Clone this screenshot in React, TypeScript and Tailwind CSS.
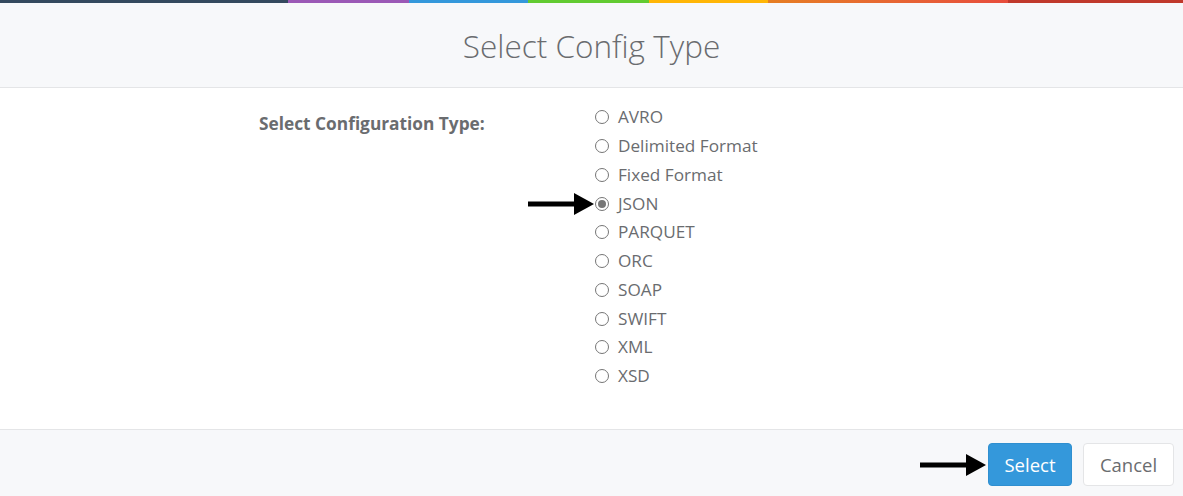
import React from "react";

const options = [
  "AVRO",
  "Delimited Format",
  "Fixed Format",
  "JSON",
  "PARQUET",
  "ORC",
  "SOAP",
  "SWIFT",
  "XML",
  "XSD",
];

function Arrow() {
  return (
    <svg width="66" height="24" viewBox="0 0 66 24" className="block">
      <rect x="0" y="9.5" width="48" height="5" fill="#000" />
      <polygon points="46,1 66,12 46,23" fill="#000" />
    </svg>
  );
}

export default function App() {
  return (
    <div
      className="w-[1183px] h-[496px] flex flex-col bg-white overflow-hidden"
      style={{ fontFamily: '"Open Sans", "Liberation Sans", sans-serif' }}
    >
      <div className="flex h-[3px] shrink-0">
        <div className="w-[288px] bg-[#34495e]" />
        <div className="w-[121px] bg-[#9b59b6]" />
        <div className="w-[119px] bg-[#3498db]" />
        <div className="w-[121px] bg-[#62cb31]" />
        <div className="w-[119px] bg-[#ffb606]" />
        <div className="w-[240px] bg-gradient-to-r from-[#e67e22] to-[#e74c3c]" />
        <div className="flex-1 bg-[#c0392b]" />
      </div>
      <div className="h-[85px] shrink-0 bg-[#f7f8fa] border-b border-[#e4e5e7] flex items-center justify-center">
        <h1 className="text-[31.5px] font-light text-[#6a6c6f] mt-[1px]">
          Select Config Type
        </h1>
      </div>
      <div className="flex-1 flex pt-[15px]">
        <div className="w-[595px] pl-[259px] pt-[8px]">
          <span className="text-[17.3px] font-bold text-[#6a6c6f]">
            Select Configuration Type:
          </span>
        </div>
        <div className="flex flex-col">
          {options.map((o) => (
            <label
              key={o}
              className="relative flex items-center h-[28.75px] text-[17.2px] text-[#6a6c6f]"
            >
              {o === "JSON" && (
                <span className="absolute left-[-67px] top-[3px]">
                  <Arrow />
                </span>
              )}
              <span className="w-[14px] h-[14px] rounded-full border border-[#767676] flex items-center justify-center mr-[9px] bg-white">
                {o === "JSON" && (
                  <span className="w-[8px] h-[8px] rounded-full bg-[#767676]" />
                )}
              </span>
              {o}
            </label>
          ))}
        </div>
      </div>
      <div className="h-[67px] shrink-0 bg-[#f7f8fa] border-t border-[#e4e5e7] flex items-start justify-end pt-[13px] pr-[9px]">
        <div className="mt-[10px] mr-[2px]">
          <Arrow />
        </div>
        <button className="w-[84px] h-[43px] rounded-[4px] bg-[#3498db] text-white text-[18.5px] border border-[#2f8fd0]">
          Select
        </button>
        <button className="ml-[11px] w-[91px] h-[43px] rounded-[4px] bg-white text-[#6a6c6f] text-[18.5px] border border-[#e4e5e7]">
          Cancel
        </button>
      </div>
    </div>
  );
}
